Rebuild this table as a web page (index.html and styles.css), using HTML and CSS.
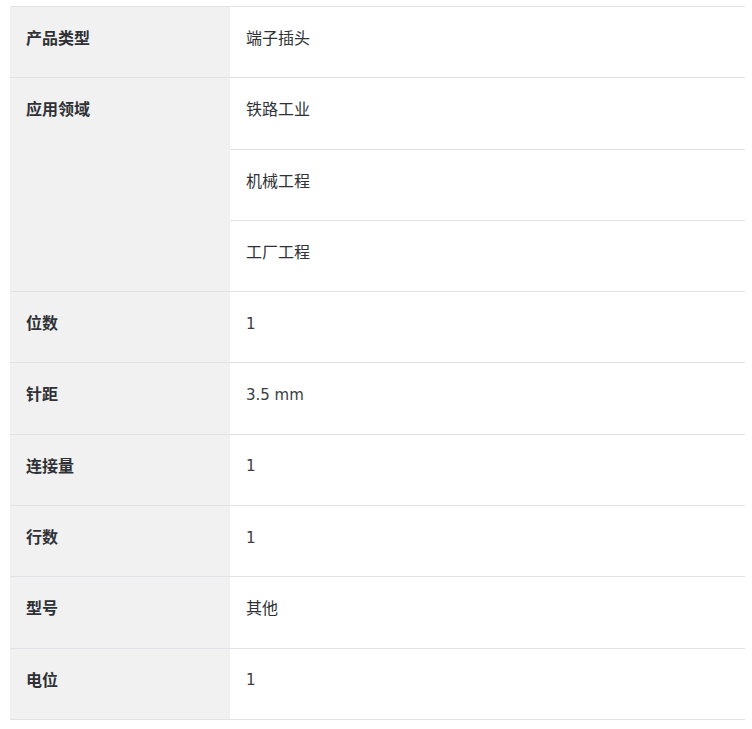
FILE: index.html
```html
<!DOCTYPE html>
<html lang="zh-CN">
<head>
<meta charset="utf-8">
<title>产品参数</title>
<link rel="stylesheet" href="styles.css">
</head>
<body>
<table class="spec">
  <tbody>
    <tr><th>产品类型</th><td>端子插头</td></tr>
    <tr><th rowspan="3">应用领域</th><td>铁路工业</td></tr>
    <tr><td>机械工程</td></tr>
    <tr><td>工厂工程</td></tr>
    <tr><th>位数</th><td class="num">1</td></tr>
    <tr><th>针距</th><td class="num">3.5 mm</td></tr>
    <tr><th>连接量</th><td class="num">1</td></tr>
    <tr><th>行数</th><td class="num">1</td></tr>
    <tr><th>型号</th><td>其他</td></tr>
    <tr><th>电位</th><td class="num">1</td></tr>
  </tbody>
</table>
</body>
</html>
```
FILE: styles.css
```css
html, body {
  margin: 0;
  padding: 0;
  background: #ffffff;
}
body {
  padding: 6px 7px 0 10px;
  font-family: "Noto Sans CJK SC", "Noto Sans", sans-serif;
  color: #2f3136;
}
.spec {
  width: 735px;
  border-collapse: collapse;
  table-layout: fixed;
}
.spec th,
.spec td {
  border-top: 1px solid #e2e2e6;
  border-bottom: 1px solid #e2e2e6;
  font-size: 16px;
  line-height: 24px;
  padding: 18px 16px 28.3px 16px;
  text-align: left;
  vertical-align: top;
}
.spec th {
  width: 188px;
  background: #f1f1f1;
  font-weight: 700;
}
.spec td {
  font-weight: 400;
}
.spec td.num {
  font-family: "DejaVu Sans", sans-serif;
  font-size: 15px;
  color: #3a3c42;
  padding-top: 19.5px;
  padding-bottom: 26.8px;
}
```
